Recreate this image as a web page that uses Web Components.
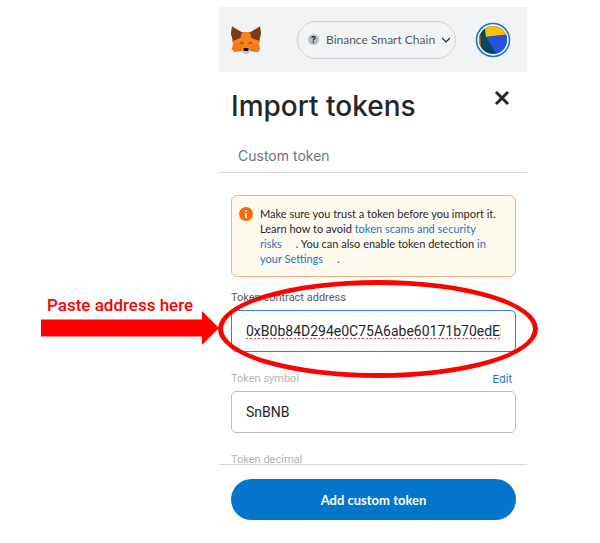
<!DOCTYPE html>
<html lang="en">
<head>
<meta charset="utf-8">
<title>Import tokens</title>
<style>
  html, body { height: 100%; margin: 0; background: #fff; }
  body { font-family: Lato, "Liberation Sans", sans-serif; color: #24272a; }
</style>
</head>
<body>
<wallet-page></wallet-page>

<script>
const define = (name, html, setup) => {
  const template = document.createElement('template');
  template.innerHTML = html;
  customElements.define(name, class extends HTMLElement {
    constructor() {
      super();
      this.attachShadow({ mode: 'open' }).append(template.content.cloneNode(true));
    }
    connectedCallback() { if (setup) setup(this, this.shadowRoot); }
  });
};

define('fox-logo', `
  <style>:host { display: block; width: 30px; height: 28px; } svg { display: block; width: 100%; height: 100%; }</style>
  <svg viewBox="0 0 30 28" role="img" aria-label="MetaMask">
    <path fill="#f6851b" d="M3 5 10 6h10l7-1 2 11-1 1 1 6-2 3-8-1-3 2h-2l-3-2-8 1-2-3 1-6-1-1z"/>
    <path fill="#e2761b" d="m1 0 11 7-2 6-8 1L0 7zM29 0 18 7l2 6 8 1 2-7z"/>
    <path fill="#763d16" d="m1 1 11 6-3 5-7 3L0 8zM29 1 18 7l3 5 7 3 2-7z"/>
    <path fill="#ee7c1a" d="M3 17h5l3 5-1 3-7 1-2-3zM27 17h-5l-3 5 1 3 7 1 2-3z"/>
    <path fill="#f6851b" d="m10 8 5-1 5 1-2 10 1 6h-8l1-6z"/>
    <path fill="#d96a1c" d="m8 17 4-2 1 4zM22 17l-4-2-1 4zM6 24l5-1 1 2zM24 24l-5-1-1 2z"/>
    <path fill="#8a5136" d="m10 16 2 1v1l-3-1zM20 16l-2 1v1l3-1z"/>
    <path fill="#d7c1b3" d="m11 23 2-1h4l2 1-1 4-2 1h-2l-2-1z"/>
    <path fill="#161616" d="m12 23 1-1h4l1 1-1 2h-4z"/>
  </svg>`);

define('account-avatar', `
  <style>
    :host { display: block; width: 36px; height: 36px; }
    button { display: block; padding: 0; border: 0; background: none; border-radius: 50%; }
    svg { display: block; width: 36px; height: 36px; }
  </style>
  <button type="button" aria-label="Account">
    <svg viewBox="0 0 36 36">
      <defs><clipPath id="disc"><circle cx="18" cy="18" r="14"/></clipPath></defs>
      <circle cx="18" cy="18" r="16.500" fill="#f7f8fa" stroke="#1872d0" stroke-width="1.600"/>
      <g clip-path="url(#disc)">
        <path fill="#03495d" d="M0 0h36v36H0z"/>
        <path fill="#f5c000" d="M9 0h27v12L11 15z"/>
        <path fill="#2750e4" d="m11 15 25-3v24H24z"/>
        <path fill="#fb5a17" d="M0 8h5l1 19H0z"/>
      </g>
    </svg>
  </button>`);

define('network-picker', `
  <style>
    :host { display: block; }
    button { display: flex; align-items: center; gap: 7px; width: 159px; height: 38px; padding: 0 7px 0 10px;
      border: 1px solid #cfd2d6; border-radius: 19px; background: none; font: 12px Lato, sans-serif; color: #535a61; }
    i { flex: none; width: 11px; height: 11px; border-radius: 50%; background: #bbc0c5; color: #24272a;
      font: bold 9px/11px Inter, sans-serif; text-align: center; }
    span { flex: 1; text-align: left; white-space: nowrap; }
    svg { flex: none; width: 10px; height: 10px; }
  </style>
  <button type="button" aria-haspopup="listbox"><i>?</i><span><slot></slot></span>
    <svg viewBox="0 0 10 10" fill="none" stroke="#24272a" stroke-width="1.200"><path d="m0 3 4 4 4-4"/></svg>
  </button>`);

define('wallet-header', `
  <style>
    :host { display: flex; align-items: center; height: 65px; flex: none; padding: 0 16px 0 12px; background: #f2f3f5; }
    network-picker { margin: 0 19px 0 auto; }
  </style>
  <fox-logo></fox-logo>
  <network-picker>Binance Smart Chain</network-picker>
  <account-avatar></account-avatar>`);

define('screen-title', `
  <style>
    :host { display: flex; justify-content: space-between; align-items: flex-start; padding: 16px 16px 0 12px; }
    h1 { margin: 0; font: 500 28px/36px Inter, sans-serif; }
    button { padding: 0; border: 0; background: none; }
    svg { display: block; width: 18px; height: 20px; }
  </style>
  <h1><slot></slot></h1>
  <button type="button" aria-label="Close"><svg viewBox="0 0 18 20" stroke="#24272a" stroke-width="3"><path d="m3 4 12 12M15 4 3 16"/></svg></button>`);

define('tab-bar', `
  <style>
    :host { display: flex; margin-top: 16px; padding: 0 12px; border-bottom: 1px solid #d6d9dc; }
    button { padding: 6px 7px; border: 0; background: none; color: #6a737d; font: 14px/20px Inter, sans-serif; }
  </style>
  <button type="button" role="tab" aria-selected="true"><slot></slot></button>`);

define('warning-note', `
  <style>
    :host { display: flex; gap: 7px; padding: 10px 16px 10px 7px; border: 1px solid #ffab7c; border-radius: 6px; background: #fffaef; }
    svg { flex: none; width: 14px; height: 14px; margin-top: 1px; }
    p { margin: 0; font: 11px/15px Lato, sans-serif; }
    a { color: #1f6fd0; text-decoration: none; }
    .gap { display: inline-block; width: 14px; }
  </style>
  <svg viewBox="0 0 14 14"><circle cx="7" cy="7" r="7" fill="#f66a0a"/><path stroke="#fff" stroke-width="1.800" d="M7 6v5M7 3v1.800"/></svg>
  <p>Make sure you trust a token before you import it. Learn how to avoid <a href="#scams">token scams and security risks</a><span class="gap"></span>. You can also enable token detection <a href="#settings">in your Settings</a><span class="gap"></span>.</p>`);

define('text-field', `
  <style>
    :host { display: block; position: relative; }
    .top { display: flex; justify-content: space-between; padding: 0 4px 0 0; font: 11px/14px Roboto, sans-serif; color: #b0b3b7; }
    :host([focused]) .top { color: #535a61; }
    input { display: block; box-sizing: border-box; width: 100%; height: 42px; margin-top: 5px; padding: 0 14px; border: 1px solid #bbc0c5;
      border-radius: 5px; outline: 0; background: #fff; color: #24272a; font: 14px Roboto, sans-serif; }
    :host([focused]) input { border-color: #2f80dc; text-decoration: underline dotted #ff4040 2px; text-underline-offset: 2px; }
  </style>
  <div class="top"><label for="box"></label><slot name="action"></slot></div>
  <input id="box" type="text" spellcheck="false">
  <slot></slot>`, (host, root) => {
  root.querySelector('label').textContent = host.getAttribute('label');
  root.querySelector('input').value = host.getAttribute('value') || '';
});

/* Hand-drawn callout lying over the field it points at. */
define('field-callout', `
  <style>
    :host { position: absolute; inset: -11px -22px -26px -13px; pointer-events: none; }
    .ring { position: absolute; inset: 0; border: 5px solid #f00; border-radius: 50%; }
    .pointer { position: absolute; right: 100%; top: 16px; width: 178px; margin-right: -1px; color: #f00; }
    p { margin: 0; padding-left: 6px; font: 500 17px/18px Roboto, sans-serif; white-space: nowrap; }
    svg { display: block; width: 100%; height: 34px; margin-top: -3px; }
  </style>
  <div class="ring"></div>
  <div class="pointer"><p><slot></slot></p>
    <svg viewBox="0 0 178 34" fill="#f00"><path d="M0 8.500h161V0l17 17-17 17v-8.500H0z"/></svg></div>`);

define('token-form', `
  <style>
    :host { display: flex; flex-direction: column; padding: 22px 11px 0 12px; }
    text-field { margin-top: 20px; }
    .address { margin-top: 14px; z-index: 1; }
    a { color: #1f6fd0; text-decoration: none; font: 11px/14px Inter, sans-serif; }
  </style>
  <warning-note></warning-note>
  <text-field class="address" focused label="Token contract address" value="0xB0b84D294e0C75A6abe60171b70edEb2EFd14A1B">
    <field-callout>Paste address here</field-callout>
  </text-field>
  <text-field label="Token symbol" value="SnBNB"><a slot="action" href="#edit">Edit</a></text-field>
  <text-field label="Token decimal" value="18"></text-field>`);

define('action-footer', `
  <style>
    :host { display: block; flex: none; padding: 14px 11px 23px 12px; border-top: 1px solid #d6d9dc; }
    button { display: block; width: 100%; height: 41px; border: 0; border-radius: 21px; background: #0376c9; color: #fff; font: bold 13px/38px Lato, sans-serif; }
  </style>
  <button type="button"><slot></slot></button>`);

define('wallet-page', `
  <style>
    :host { display: grid; grid-template-columns: 219fr 308fr 73fr; box-sizing: border-box; height: 100%; padding-top: 7px; }
    main { grid-column: 2; display: flex; flex-direction: column; min-width: 0; min-height: 0; }
    .content { flex: 1; min-height: 0; overflow-x: visible; overflow-y: clip; }
  </style>
  <main>
    <wallet-header></wallet-header>
    <div class="content">
      <screen-title>Import tokens</screen-title>
      <tab-bar>Custom token</tab-bar>
      <token-form></token-form>
    </div>
    <action-footer>Add custom token</action-footer>
  </main>`);
</script>
</body>
</html>
